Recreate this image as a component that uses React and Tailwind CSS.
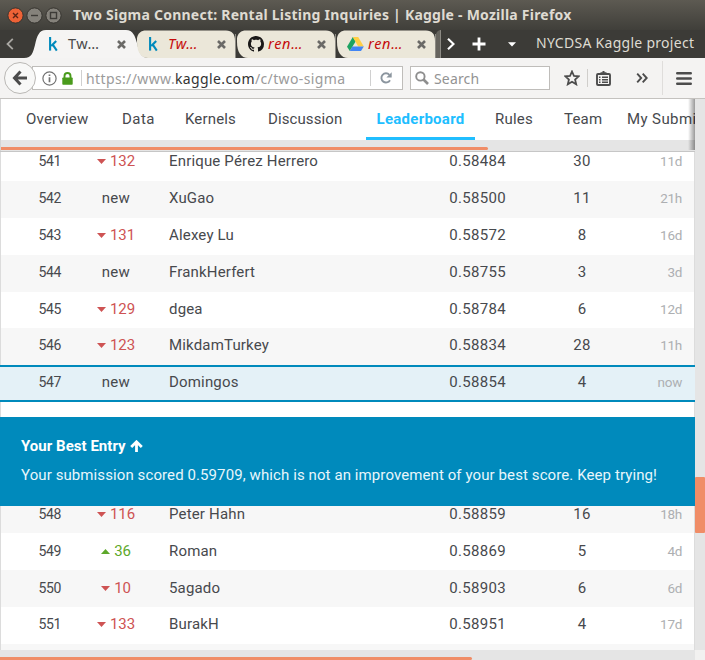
import React from "react";

const UI = "font-['Noto_Sans','Open_Sans',sans-serif]";

function KaggleIcon() {
  return (
    <svg width="16" height="16" viewBox="0 0 16 16" fill="none" stroke="#008abc" strokeWidth="2.1">
      <path d="M2.1 1V14.6" />
      <path d="M8.2 4.9L3.2 10.1M4.6 8.4L8.8 14.6" />
    </svg>
  );
}

function GithubIcon() {
  return (
    <svg width="16" height="16" viewBox="0 0 16 16" fill="#191717">
      <path d="M8 0C3.58 0 0 3.58 0 8c0 3.54 2.29 6.53 5.47 7.59.4.07.55-.17.55-.38 0-.19-.01-.82-.01-1.49-2.01.37-2.53-.49-2.69-.94-.09-.23-.48-.94-.82-1.13-.28-.15-.68-.52-.01-.53.63-.01 1.08.58 1.23.82.72 1.21 1.87.87 2.33.66.07-.52.28-.87.51-1.07-1.78-.2-3.64-.89-3.64-3.95 0-.87.31-1.59.82-2.15-.08-.2-.36-1.02.08-2.12 0 0 .67-.21 2.2.82.64-.18 1.32-.27 2-.27s1.36.09 2 .27c1.53-1.04 2.2-.82 2.2-.82.44 1.1.16 1.92.08 2.12.51.56.82 1.27.82 2.15 0 3.07-1.87 3.75-3.65 3.95.29.25.54.73.54 1.48 0 1.07-.01 1.93-.01 2.2 0 .21.15.46.55.38A8.01 8.01 0 0 0 16 8c0-4.42-3.58-8-8-8z" />
    </svg>
  );
}

function DriveIcon() {
  return (
    <svg width="17" height="16" viewBox="0 0 17 16" className="-ml-px">
      <path d="M5.8 1L0 10.8L2.8 15L8.6 5.6Z" fill="#1da362" />
      <path d="M5.8 1H11.2L16.8 10.4H11.2Z" fill="#ffcf44" />
      <path d="M5.4 10.4H16.8L14 15H2.8Z" fill="#4285f4" />
    </svg>
  );
}

function CloseIcon() {
  return (
    <svg width="9" height="9" viewBox="0 0 9 9" stroke="#6b6a67" strokeWidth="2.6">
      <path d="M1 1L8 8M8 1L1 8" />
    </svg>
  );
}

function WindowButton({ kind }) {
  const close = kind === "close";
  return (
    <svg width="17" height="17" viewBox="0 0 17 17">
      <circle cx="8.5" cy="8.5" r="7.6" fill={close ? "#ee6236" : "#85827b"} stroke="#33312d" strokeWidth="0.9" />
      <g stroke={close ? "#5b2415" : "#3d3b37"} strokeWidth="1.4" fill="none">
        {close && <path d="M6 6L11 11M11 6L6 11" />}
        {kind === "min" && <path d="M5 8.5H12" />}
        {kind === "max" && <rect x="5.5" y="5.5" width="6" height="6" />}
      </g>
    </svg>
  );
}

function Tab({ icon, label, active }) {
  return (
    <div className="relative h-7 w-[100px] shrink-0">
      {active ? (
        <svg className="absolute -left-[12px] top-0" width="126" height="28" viewBox="0 0 126 28">
          <path d="M0 28C8 28 9 22 11 15C13 6 15 0 22 0H102C109 0 111 6 113 13C115 22 117 28 125 28Z" fill="#f5f4f3" />
        </svg>
      ) : (
        <svg className="absolute left-0 top-0" width="100" height="28" viewBox="0 0 100 28">
          <path d="M1 8C2 3 5 0.5 10 0.5H90C96 0.5 99 4 99 11V28H12C5 28 1 22 1 12Z" fill="#ebe7d9" />
          <path d="M99.5 4V28" stroke="#8c8a83" />
        </svg>
      )}
      <div className="relative flex h-full items-center pl-3">
        <div className="w-5">{icon}</div>
        <div className={active ? "w-[49px] text-[14.5px] tracking-[0.4px] text-[#4a4a4a]" : "w-[49px] text-[14.5px] italic tracking-[0.7px] text-[#c60c0c]"}>{label}</div>
        <CloseIcon />
      </div>
    </div>
  );
}

const navItems = [
  ["Overview", "w-24 tracking-[0.2px]"],
  ["Data", "w-[63px] tracking-[0.45px]"],
  ["Kernels", "w-[83px] tracking-[0.15px]"],
  ["Discussion", "w-[98px] tracking-[0.1px]"],
];

const rowsAbove = [
  [541, "132", "Enrique Pérez Herrero", "0.58484", 30, "11d", "h-[29px]"],
  [542, "new", "XuGao", "0.58500", 11, "21h", "h-[37px]"],
  [543, "131", "Alexey Lu", "0.58572", 8, "16d", "h-[37px]"],
  [544, "new", "FrankHerfert", "0.58755", 3, "3d", "h-[37px]"],
  [545, "129", "dgea", "0.58784", 6, "12d", "h-[36px]"],
  [546, "123", "MikdamTurkey", "0.58834", 28, "11h", "h-[37px]"],
];

const rowsBelow = [
  [548, "116", "Peter Hahn", "0.58859", 16, "18h", "h-[27px]"],
  [549, "+36", "Roman", "0.58869", 5, "4d", "h-[37px]"],
  [550, "10", "5agado", "0.58903", 6, "6d", "h-[37px]"],
  [551, "133", "BurakH", "0.58951", 4, "17d", "h-[37px]"],
];

function Change({ value }) {
  if (value === "new") return <span>new</span>;
  const up = value.startsWith("+");
  return (
    <span className={up ? "flex items-center gap-[4px] text-[#5da82a]" : "flex items-center gap-[4px] text-[#ce5353]"}>
      <svg width="9" height="5" viewBox="0 0 9 5" fill="currentColor">
        <path d={up ? "M0 5L4.5 0L9 5Z" : "M0 0L4.5 5L9 0Z"} />
      </svg>
      <span className="tracking-[-0.1px]">{up ? value.slice(1) : value}</span>
    </span>
  );
}

function Row({ row, bg, pad = "pb-0.5" }) {
  const [rank, change, name, score, entries, last, height] = row;
  return (
    <div className={`flex items-end ${height} ${bg}`}>
      <div className={`flex h-[37px] w-full shrink-0 items-center text-[15px] tracking-[0.3px] text-[#47494d] ${pad}`}>
        <div className="w-[60px] pb-px text-right text-sm tracking-[-0.4px]">{rank}</div>
        <div className="flex w-[108px] justify-center pl-0.5">
          <Change value={change} />
        </div>
        <div className="w-[220px] tracking-[0.17px]">{name}</div>
        <div className="w-[117px] text-right">{score}</div>
        <div className="w-[152px] text-center">{entries}</div>
        <div className="w-6 whitespace-nowrap text-right text-[13.5px] tracking-[-0.3px] text-[#adafb2]">
          <span className="float-right">{last}</span>
        </div>
      </div>
    </div>
  );
}

export default function App() {
  return (
    <div className="flex h-[660px] w-[705px] flex-col overflow-hidden bg-[#3c3b37] font-[Roboto,sans-serif]">
      <div className={`flex h-[30px] items-center bg-gradient-to-b from-[#5d5a52] to-[#403f3a] pl-[7px] ${UI}`}>
        <div className="flex gap-[2px]">
          <WindowButton kind="close" />
          <WindowButton kind="min" />
          <WindowButton kind="max" />
        </div>
        <div className="ml-[11px] whitespace-nowrap text-sm font-bold tracking-[0.235px] text-[#dfdbd2]">
          Two Sigma Connect: Rental Listing Inquiries | Kaggle - Mozilla Firefox
        </div>
      </div>

      <div className={`flex h-7 shrink-0 items-center ${UI}`}>
        <div className="flex w-9 shrink-0 justify-center pr-4">
          <svg width="8" height="12" viewBox="0 0 8 12" fill="none" stroke="#a9a7a2" strokeWidth="1.8">
            <path d="M6.8 0.8L1.5 6L6.8 11.2" />
          </svg>
        </div>
        <Tab icon={<KaggleIcon />} label="Tw…" active />
        <Tab icon={<KaggleIcon />} label="Tw…" />
        <Tab icon={<GithubIcon />} label="ren…" />
        <Tab icon={<DriveIcon />} label="ren…" />
        <div className="h-7 w-[5px] rounded-tl-lg border-r border-[#8c8a83] bg-[#66645e]" />
        <svg className="ml-[6px]" width="8" height="12" viewBox="0 0 8 12" fill="none" stroke="#fff" strokeWidth="2.2">
          <path d="M1 0.8L6.5 6L1 11.2" />
        </svg>
        <svg className="ml-[17px]" width="14" height="14" viewBox="0 0 14 14" stroke="#fff" strokeWidth="2.8">
          <path d="M7 0.5V13.5M0.5 7H13.5" />
        </svg>
        <svg className="ml-[22px] mt-px" width="8" height="5" viewBox="0 0 8 5" fill="#fff">
          <path d="M0 0.3H8L4 4.5Z" />
        </svg>
        <div className="ml-[20px] whitespace-nowrap pb-0.5 text-sm tracking-[0.28px] text-[#dfdbd2]">NYCDSA Kaggle project</div>
      </div>

      <div className={`flex h-[41px] shrink-0 items-center border-b border-[#c4c2bf] bg-[#f4f3f2] pl-1 ${UI}`}>
        <div className="z-10 flex size-8 items-center justify-center rounded-full border border-[#bab8b5] bg-[#f8f8f7]">
          <svg width="16" height="16" viewBox="0 0 16 16" fill="none" stroke="#4c4c4c" strokeWidth="3">
            <path d="M8.5 1.5L2.5 8L8.5 14.5M3 8H15" />
          </svg>
        </div>
        <div className="-ml-1 flex h-6 w-[371px] items-center border border-[#bfbdba] bg-white pl-[9px]">
          <svg width="15" height="15" viewBox="0 0 15 15" fill="none" stroke="#727272">
            <circle cx="7.5" cy="7.5" r="6.6" strokeWidth="1.2" />
            <path d="M7.5 6.3V11.2M7.5 3.5V5.1" strokeWidth="1.7" />
          </svg>
          <svg className="ml-[5px]" width="11" height="13" viewBox="0 0 11 13">
            <path d="M2.5 6V4A3 3 0 0 1 8.5 4V6" fill="none" stroke="#4a9b1c" strokeWidth="1.9" />
            <rect x="0.3" y="5.4" width="10.4" height="7.3" rx="0.8" fill="#4a9b1c" />
          </svg>
          <div className="ml-[8px] h-4 w-px bg-[#d0d0d0]" />
          <div className="ml-1 w-[261px] whitespace-nowrap pt-px text-sm tracking-[0.38px] text-[#9b9b9b]">
            https://www.<span className="text-[#333]">kaggle.com</span>/c/two-sigma
          </div>
          <div className="ml-[23px] h-4 w-px bg-[#d0d0d0]" />
          <svg className="ml-[9px]" width="12" height="12" viewBox="0 0 12 12" fill="none" stroke="#8b959e" strokeWidth="1.9">
            <path d="M9.4 2.8A4.6 4.6 0 1 0 10 8.2" />
            <path d="M11.7 0.2V5.4H6.4Z" fill="#8b959e" stroke="none" />
          </svg>
        </div>
        <div className="ml-[7px] flex h-6 w-[140px] items-center border border-[#bfbdba] bg-white pl-1">
          <svg width="14" height="14" viewBox="0 0 14 14" fill="none" stroke="#8e8e8e">
            <circle cx="5.4" cy="5.4" r="4.2" strokeWidth="1.9" />
            <path d="M8.5 8.5L13 13" strokeWidth="2.6" />
          </svg>
          <span className="ml-[5px] pt-px text-sm tracking-[0.15px] text-[#939393]">Search</span>
        </div>
        <svg className="ml-[14px]" width="16" height="16" viewBox="0 0 16 16" fill="none" stroke="#4c4c4c" strokeWidth="1.8">
          <path d="M8 1.5L10 6L14.6 6.4L11.1 9.6L12.2 14.3L8 11.8L3.8 14.3L4.9 9.6L1.4 6.4L6 6Z" />
        </svg>
        <div className="ml-[7px] h-[18px] w-px bg-[#d0cecb]" />
        <svg className="ml-[8px]" width="15" height="15" viewBox="0 0 15 15" fill="none" stroke="#4c4c4c">
          <rect x="1" y="3" width="13" height="11" rx="1" strokeWidth="1.9" />
          <path d="M4.5 2.2H10.5M7.5 0V2" strokeWidth="2" />
          <path d="M3 6.2H4.5M6 6.2H12M3 8.7H4.5M6 8.7H12M3 11.2H4.5M6 11.2H12" strokeWidth="1.4" />
        </svg>
        <svg className="ml-[25px]" width="13" height="10" viewBox="0 0 13 10" fill="none" stroke="#4c4c4c" strokeWidth="1.9">
          <path d="M1.2 0.7L5.2 5L1.2 9.3M6.7 0.7L10.7 5L6.7 9.3" />
        </svg>
        <div className="ml-[13px] h-[34px] w-px bg-[#dfdddb]" />
        <svg className="ml-[13px]" width="16" height="13" viewBox="0 0 16 13" stroke="#4c4c4c" strokeWidth="2.6" strokeLinecap="round">
          <path d="M1.3 1.3H14.7M1.3 6.5H14.7M1.3 11.7H14.7" />
        </svg>
      </div>

      <div className="flex min-h-0 flex-1 bg-[#e5e5e5]">
        <div className="flex w-[695px] flex-col">
          <div className="relative h-[52px] shrink-0 border-l border-[#d5d5d5]">
            <div className="flex h-[41px] items-stretch overflow-hidden whitespace-nowrap bg-white pl-[25px] text-[15px] leading-[40px] text-[#47494d]">
              {navItems.map(([label, cls]) => (
                <div key={label} className={`shrink-0 ${cls}`}>{label}</div>
              ))}
              <div className="w-[109px] shrink-0 border-b-[3px] border-[#20beff] text-center font-bold tracking-[0.27px] text-[#20beff]">Leaderboard</div>
              <div className="ml-5 w-[69px] shrink-0 tracking-[0.2px]">Rules</div>
              <div className="w-[63px] shrink-0 tracking-[0.2px]">Team</div>
              <div className="shrink-0 tracking-[0.4px]">My Submissions</div>
            </div>
            <div className="mt-[7px] h-[3px] w-[487px] rounded-r-sm bg-[#f08d67]" />
            <div className="absolute right-0 top-0 h-[51px] w-[7px] bg-gradient-to-r from-transparent to-black/40" />
          </div>
          <div className="h-px shrink-0 bg-[#c6c6c6]" />
          <div className="border-x border-[#dcdcdc]">
            {rowsAbove.map((row, i) => (
              <Row key={row[0]} row={row} bg={i % 2 ? "bg-[#f7f7f7]" : "bg-white"} pad={row[0] === 545 ? "pb-0" : "pb-0.5"} />
            ))}
          </div>
          <div className="shrink-0 border-y-2 border-[#008abc] bg-[#e4f1f7] px-px">
            <Row row={[547, "new", "Domingos", "0.58854", 4, "now", "h-[33px]"]} bg="bg-[#e4f1f7]" pad="pt-0.5" />
          </div>
          <div className="h-[15px] shrink-0 border-x border-[#dcdcdc] bg-white" />
          <div className="h-[89px] shrink-0 bg-[#008abc] pl-[21px] pt-[19px] text-[15px] text-white">
            <div className="flex h-5 items-center font-bold tracking-[0.03px]">
              Your Best Entry
              <svg className="ml-1" width="13" height="12" viewBox="0 0 13 12" fill="none" stroke="#fff" strokeWidth="2.8">
                <path d="M1.2 7L6.5 1.8L11.8 7M6.5 2V12" />
              </svg>
            </div>
            <div className="mt-[9px] h-5 whitespace-nowrap leading-5 tracking-[0.095px] text-[#e8f6fb]">
              Your submission scored 0.59709, which is not an improvement of your best score. Keep trying!
            </div>
          </div>
          <div className="border-x border-[#dcdcdc]">
            {rowsBelow.map((row, i) => (
              <Row key={row[0]} row={row} bg={i % 2 ? "bg-white" : "bg-[#f7f7f7]"} pad={row[0] === 551 ? "pb-0.5" : "pb-0"} />
            ))}
            <div className="h-[6px] bg-[#f7f7f7]" />
          </div>
          <div className="mt-[7px] h-[3px] w-[472px] shrink-0 rounded-r-sm bg-[#f08d67]" />
        </div>
        <div className="flex w-[10px] flex-col justify-between pt-[378px]">
          <div className="h-[56px] rounded-[1px] bg-[#f08d67]" />
          <div className="h-[10px] bg-[#f2f1f0]" />
        </div>
      </div>
    </div>
  );
}
